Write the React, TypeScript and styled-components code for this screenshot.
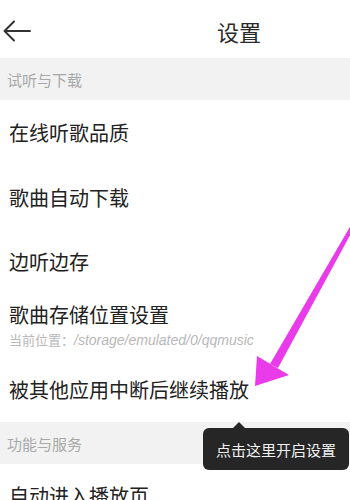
import styled, { createGlobalStyle } from "styled-components";

const GlobalStyle = createGlobalStyle`
	html, body {
		margin: 0;
		padding: 0;
		background: #fff;
	}
	body {
		font-family: "Noto Sans CJK SC", "Noto Sans", sans-serif;
	}
`;

const Page = styled.div`
	position: relative;
	width: 350px;
	height: 500px;
	overflow: hidden;
	background: #fff;
`;

const Header = styled.div`
	height: 58px;
	display: flex;
	align-items: center;
`;

const BackButton = styled.div`
	width: 30px;
	height: 26px;
	margin-left: 2px;
	margin-top: 4px;
	display: flex;
	align-items: center;
`;

const Title = styled.div`
	margin-left: 185px;
	margin-top: 4px;
	font-size: 22px;
	line-height: 26px;
	color: #2a2a2a;
`;

const SectionHeader = styled.div`
	height: 42px;
	display: flex;
	align-items: center;
	padding-left: 7px;
	background: #f2f2f2;
	font-size: 15px;
	color: #a8a8a8;
`;

const Row = styled.div<{ $h: number }>`
	height: ${(p) => p.$h}px;
	display: flex;
	flex-direction: column;
	justify-content: center;
	padding-left: 9px;
`;

const RowTitle = styled.div`
	font-size: 20px;
	line-height: 24px;
	color: #222;
`;

const RowSub = styled.div`
	margin-top: 4px;
	font-size: 13px;
	line-height: 18px;
	color: #b8b8b8;
	white-space: nowrap;
`;

const Path = styled.span`
	font-family: "Liberation Sans", Arial, sans-serif;
	font-size: 14px;
	font-style: italic;
`;

const Tooltip = styled.div`
	position: absolute;
	left: 203px;
	top: 428px;
	width: 146px;
	height: 42px;
	border-radius: 6px;
	background: #262626;
	color: #f0f0f0;
	font-size: 15px;
	display: flex;
	align-items: center;
	justify-content: center;
	&::before {
		content: "";
		position: absolute;
		left: 30px;
		top: -6px;
		border-left: 6px solid transparent;
		border-right: 6px solid transparent;
		border-bottom: 6px solid #262626;
	}
`;

const Overlay = styled.svg`
	position: absolute;
	left: 0;
	top: 0;
	pointer-events: none;
`;

const rows = [
	{ title: "在线听歌品质", h: 66 },
	{ title: "歌曲自动下载", h: 64 },
	{ title: "边听边存", h: 64 },
];

const App = () => {
	return (
		<Page>
			<GlobalStyle />
			<Header>
				<BackButton>
					<svg width="30" height="26" viewBox="0 0 30 26">
						<path
							d="M28 13H3M12 3.5L2.5 13l9.5 9.5"
							fill="none"
							stroke="#333"
							strokeWidth="2"
							strokeLinecap="round"
							strokeLinejoin="round"
						/>
					</svg>
				</BackButton>
				<Title>设置</Title>
			</Header>
			<SectionHeader>试听与下载</SectionHeader>
			{rows.map((r) => (
				<Row key={r.title} $h={r.h}>
					<RowTitle>{r.title}</RowTitle>
				</Row>
			))}
			<Row $h={64}>
				<RowTitle>歌曲存储位置设置</RowTitle>
				<RowSub>
					当前位置：<Path>/storage/emulated/0/qqmusic</Path>
				</RowSub>
			</Row>
			<Row $h={64}>
				<RowTitle>被其他应用中断后继续播放</RowTitle>
			</Row>
			<SectionHeader>功能与服务</SectionHeader>
			<Row $h={64}>
				<RowTitle>自动进入播放页</RowTitle>
			</Row>
			<Tooltip>点击这里开启设置</Tooltip>
			<Overlay width="350" height="500" viewBox="0 0 350 500">
				<polygon points="351,225 354,228 278,368 270,364" fill="#e93be9" />
				<polygon points="255,386 257,356 289,375" fill="#e93be9" />
			</Overlay>
		</Page>
	);
};

export default App;
